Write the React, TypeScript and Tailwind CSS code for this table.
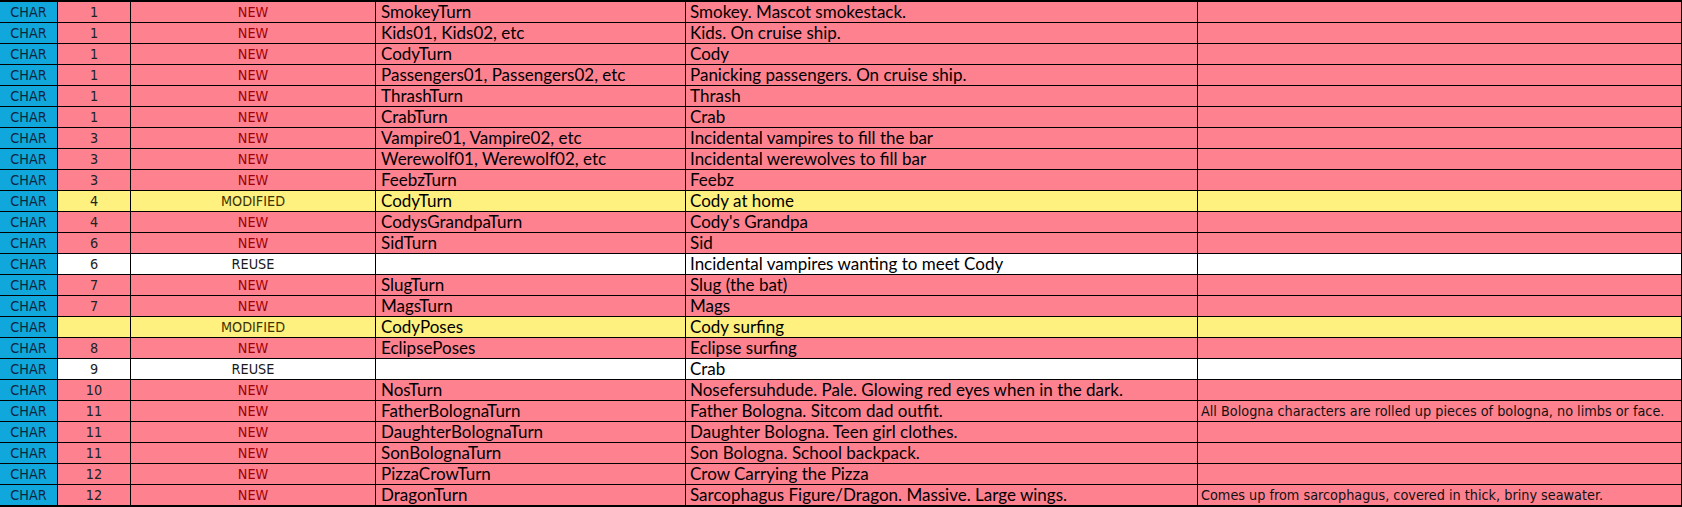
import React from "react";

type Row = { n: string; s: "NEW" | "MODIFIED" | "REUSE"; a: string; d: string; note?: string };

const rows: Row[] = [
  { n: "1", s: "NEW", a: "SmokeyTurn", d: "Smokey. Mascot smokestack." },
  { n: "1", s: "NEW", a: "Kids01, Kids02, etc", d: "Kids. On cruise ship." },
  { n: "1", s: "NEW", a: "CodyTurn", d: "Cody" },
  { n: "1", s: "NEW", a: "Passengers01, Passengers02, etc", d: "Panicking passengers. On cruise ship." },
  { n: "1", s: "NEW", a: "ThrashTurn", d: "Thrash" },
  { n: "1", s: "NEW", a: "CrabTurn", d: "Crab" },
  { n: "3", s: "NEW", a: "Vampire01, Vampire02, etc", d: "Incidental vampires to fill the bar" },
  { n: "3", s: "NEW", a: "Werewolf01, Werewolf02, etc", d: "Incidental werewolves to fill bar" },
  { n: "3", s: "NEW", a: "FeebzTurn", d: "Feebz" },
  { n: "4", s: "MODIFIED", a: "CodyTurn", d: "Cody at home" },
  { n: "4", s: "NEW", a: "CodysGrandpaTurn", d: "Cody's Grandpa" },
  { n: "6", s: "NEW", a: "SidTurn", d: "Sid" },
  { n: "6", s: "REUSE", a: "", d: "Incidental vampires wanting to meet Cody" },
  { n: "7", s: "NEW", a: "SlugTurn", d: "Slug (the bat)" },
  { n: "7", s: "NEW", a: "MagsTurn", d: "Mags" },
  { n: "", s: "MODIFIED", a: "CodyPoses", d: "Cody surfing" },
  { n: "8", s: "NEW", a: "EclipsePoses", d: "Eclipse surfing" },
  { n: "9", s: "REUSE", a: "", d: "Crab" },
  { n: "10", s: "NEW", a: "NosTurn", d: "Nosefersuhdude. Pale. Glowing red eyes when in the dark." },
  {
    n: "11",
    s: "NEW",
    a: "FatherBolognaTurn",
    d: "Father Bologna. Sitcom dad outfit.",
    note: "All Bologna characters are rolled up pieces of bologna, no limbs or face.",
  },
  { n: "11", s: "NEW", a: "DaughterBolognaTurn", d: "Daughter Bologna. Teen girl clothes." },
  { n: "11", s: "NEW", a: "SonBolognaTurn", d: "Son Bologna. School backpack." },
  { n: "12", s: "NEW", a: "PizzaCrowTurn", d: "Crow Carrying the Pizza" },
  {
    n: "12",
    s: "NEW",
    a: "DragonTurn",
    d: "Sarcophagus Figure/Dragon. Massive. Large wings.",
    note: "Comes up from sarcophagus, covered in thick, briny seawater.",
  },
];

const tahoma = "font-['DejaVu_Sans_Condensed','DejaVu_Sans',sans-serif] text-[14.3px] leading-[21px]";
const calibri = "font-['Lato',sans-serif] text-[17px] leading-[20px]";

export default function App() {
  return (
    <div className="w-[1682px] h-[507px] bg-white border-t-2 border-black overflow-hidden">
      {rows.map((r, i) => {
        const last = i === rows.length - 1;
        const bg =
          r.s === "NEW" ? "bg-[#fe818f]" : r.s === "MODIFIED" ? "bg-[#fef17f]" : "bg-white";
        const statusColor =
          r.s === "NEW" ? "text-[#9c0006]" : r.s === "MODIFIED" ? "text-[#3d3300]" : "text-[#1a1a1a]";
        return (
          <div
            key={i}
            className={`flex border-black ${last ? "h-[22px] border-b-2" : "h-[21px] border-b"} ${bg}`}
          >
            <div className={`w-[58px] shrink-0 border-r border-black bg-[#0fa7dc] text-center text-[#0f2640] ${tahoma}`}>
              CHAR
            </div>
            <div className={`w-[73px] shrink-0 border-r border-black text-center text-[#222] ${tahoma}`}>
              {r.n}
            </div>
            <div className={`w-[245px] shrink-0 border-r border-black text-center ${statusColor} ${tahoma}`}>
              {r.s}
            </div>
            <div className={`w-[310px] shrink-0 border-r border-black pl-[5px] text-black whitespace-nowrap ${calibri}`}>
              {r.a}
            </div>
            <div className={`w-[512px] shrink-0 border-r border-black pl-[4px] text-black whitespace-nowrap ${calibri}`}>
              {r.d}
            </div>
            <div className={`w-[484px] shrink-0 border-r border-black pl-[3px] text-[#111] whitespace-nowrap ${tahoma}`}>
              {r.note ?? ""}
            </div>
          </div>
        );
      })}
    </div>
  );
}
